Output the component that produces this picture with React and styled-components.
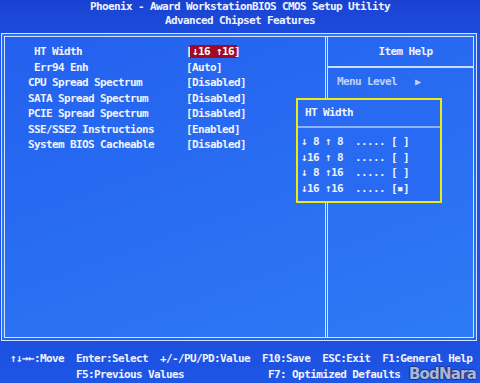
import React from 'react';
import styled, { createGlobalStyle } from 'styled-components';

// BIOS setup screen - Advanced Chipset Features

const GlobalStyle = createGlobalStyle`
  body {
    margin: 0;
    background: #1c4ad8;
  }
`;

const Screen = styled.div`
  position: relative;
  width: 480px;
  height: 383px;
  display: flex;
  flex-direction: column;
  overflow: hidden;
  background: #1e52e2;
  color: #eef3ff;
  font-family: 'DejaVu Sans Mono', 'Liberation Mono', monospace;
  font-weight: bold;
  font-size: 11px;
  letter-spacing: -0.62px;
  white-space: pre;
`;

const Header = styled.div`
  height: 33px;
  text-align: center;
  line-height: 14px;
  background: linear-gradient(to bottom, #1a42d2, #1d4cdc);
`;

const Frame = styled.div`
  height: 308px;
  box-sizing: border-box;
  margin: 0 3px 0 1px;
  border: 4px double #d4e2ff;
  display: flex;
  background: linear-gradient(160deg, #2360ee 0%, #2a70f3 60%, #2e7af5 100%);
`;

const Settings = styled.div`
  width: 320px;
  flex-shrink: 0;
  box-sizing: border-box;
  padding: 7px 0 0 23px;
  line-height: 15.5px;
`;

const Row = styled.div`
  display: grid;
  grid-template-columns: 158px auto;
`;

const Label = styled.span`
  padding-left: ${p => (p.$indent ? '6px' : '0')};
`;

const Selected = styled.span`
  display: inline-block;
  line-height: 13px;
  padding: 0 3px 0 2px;
  margin: 0 -3px 0 -2px;
  background: #a30a22;
  color: #ffffff;
`;

const HelpPanel = styled.div`
  flex: 1;
  border-left: 3px double #d4e2ff;
  display: flex;
  flex-direction: column;
`;

const HelpTitle = styled.div`
  height: 29px;
  display: flex;
  align-items: center;
  justify-content: center;
  padding-left: 10px;
  border-bottom: 2px solid #ccdcff;
`;

const HelpBody = styled.div`
  padding: 6px 0 0 9px;
  line-height: 15.5px;
  color: #c2d2f8;
`;

const Arrow = styled.span`
  font-size: 10px;
  letter-spacing: 0;
`;

const Popup = styled.div`
  position: absolute;
  left: 296px;
  top: 98px;
  width: 146px;
  height: 105px;
  box-sizing: border-box;
  border: 2px solid #ecec14;
  background: #286af1;
`;

const PopupTitle = styled.div`
  height: 26px;
  line-height: 26px;
  padding-left: 7px;
  border-bottom: 2px solid #8cb2f8;
`;

const PopupList = styled.div`
  padding: 6px 0 0 3px;
  line-height: 15.5px;
`;

const Footer = styled.div`
  flex: 1;
  padding: 10px 0 0 10px;
  line-height: 15.5px;
  background: linear-gradient(to bottom, #1c4fe0, #1e56e6);
`;

const Watermark = styled.div`
  position: absolute;
  right: 4px;
  bottom: 0;
  font-family: 'DejaVu Sans', sans-serif;
  font-size: 15px;
  font-weight: bold;
  letter-spacing: -0.8px;
  color: #a8b6da;
  text-shadow: -1px 0 #23357a, 1px 0 #23357a, 0 -1px #23357a, 0 1px #23357a;
`;

const items = [
  { label: 'HT Width', indent: true, selected: '↓16 ↑16' },
  { label: 'Err94 Enh', indent: true, value: '[Auto]' },
  { label: 'CPU Spread Spectrum', value: '[Disabled]' },
  { label: 'SATA Spread Spectrum', value: '[Disabled]' },
  { label: 'PCIE Spread Spectrum', value: '[Disabled]' },
  { label: 'SSE/SSE2 Instructions', value: '[Enabled]' },
  { label: 'System BIOS Cacheable', value: '[Disabled]' },
];

const widths = [
  '↓ 8 ↑ 8  ..... [ ]',
  '↓16 ↑ 8  ..... [ ]',
  '↓ 8 ↑16  ..... [ ]',
  '↓16 ↑16  ..... [▪]',
];

export default function App() {
  return (
    <Screen>
      <GlobalStyle />
      <Header>
        <div>Phoenix - Award WorkstationBIOS CMOS Setup Utility</div>
        <div>Advanced Chipset Features</div>
      </Header>

      <Frame>
        <Settings>
          {items.map(item => (
            <Row key={item.label}>
              <Label $indent={item.indent}>{item.label}</Label>
              {item.selected ? (
                <span>
                  [<Selected>{item.selected}</Selected>]
                </span>
              ) : (
                <span>{item.value}</span>
              )}
            </Row>
          ))}
        </Settings>

        <HelpPanel>
          <HelpTitle>Item Help</HelpTitle>
          <HelpBody>
            Menu Level   <Arrow>▶</Arrow>
          </HelpBody>
        </HelpPanel>
      </Frame>

      <Footer>
        <div>↑↓→←:Move  Enter:Select  +/-/PU/PD:Value  F10:Save  ESC:Exit  F1:General Help</div>
        <div>{'           F5:Previous Values              F7: Optimized Defaults'}</div>
      </Footer>

      {/* option list popup */}
      <Popup>
        <PopupTitle>HT Width</PopupTitle>
        <PopupList>
          {widths.map(w => (
            <div key={w}>{w}</div>
          ))}
        </PopupList>
      </Popup>

      <Watermark>BodNara</Watermark>
    </Screen>
  );
}
